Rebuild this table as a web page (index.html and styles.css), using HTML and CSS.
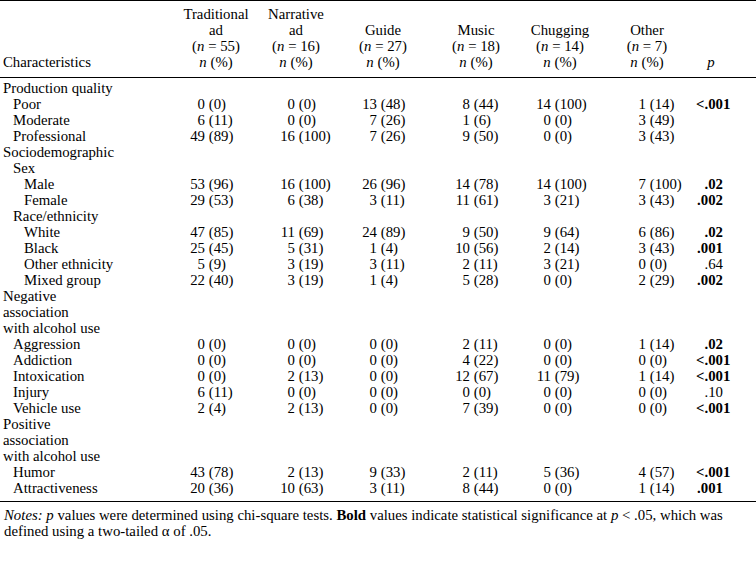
FILE: index.html
```html
<!DOCTYPE html>
<html lang="en">
<head>
<meta charset="utf-8">
<title>Ad characteristics table</title>
<link rel="stylesheet" href="styles.css">
</head>
<body>
<table class="tbl">
  <colgroup>
    <col class="c-label">
    <col class="c-trad">
    <col class="c-narr">
    <col class="c-guide">
    <col class="c-music">
    <col class="c-chug">
    <col class="c-other">
    <col class="c-p">
  </colgroup>
  <thead>
    <tr>
      <th class="h-label">Characteristics</th>
      <th>Traditional<br>ad<br>(<i>n</i> = 55)<br><i>n</i> (%)</th>
      <th>Narrative<br>ad<br>(<i>n</i> = 16)<br><i>n</i> (%)</th>
      <th>Guide<br>(<i>n</i> = 27)<br><i>n</i> (%)</th>
      <th>Music<br>(<i>n</i> = 18)<br><i>n</i> (%)</th>
      <th>Chugging<br>(<i>n</i> = 14)<br><i>n</i> (%)</th>
      <th>Other<br>(<i>n</i> = 7)<br><i>n</i> (%)</th>
      <th class="h-p"><i>p</i></th>
    </tr>
  </thead>
  <tbody>
    <tr class="first"><td class="l0">Production quality</td><td></td><td></td><td></td><td></td><td></td><td></td><td></td></tr>
    <tr><td class="l1">Poor</td><td><span class="n">0</span> (0)</td><td><span class="n">0</span> (0)</td><td><span class="n">13</span> (48)</td><td><span class="n">8</span> (44)</td><td><span class="n">14</span> (100)</td><td><span class="n">1</span> (14)</td><td class="pv"><b>&lt;.001</b></td></tr>
    <tr><td class="l1">Moderate</td><td><span class="n">6</span> (11)</td><td><span class="n">0</span> (0)</td><td><span class="n">7</span> (26)</td><td><span class="n">1</span> (6)</td><td><span class="n">0</span> (0)</td><td><span class="n">3</span> (49)</td><td class="pv"></td></tr>
    <tr><td class="l1">Professional</td><td><span class="n">49</span> (89)</td><td><span class="n">16</span> (100)</td><td><span class="n">7</span> (26)</td><td><span class="n">9</span> (50)</td><td><span class="n">0</span> (0)</td><td><span class="n">3</span> (43)</td><td class="pv"></td></tr>
    <tr><td class="l0">Sociodemographic</td><td></td><td></td><td></td><td></td><td></td><td></td><td></td></tr>
    <tr><td class="l1">Sex</td><td></td><td></td><td></td><td></td><td></td><td></td><td></td></tr>
    <tr><td class="l2">Male</td><td><span class="n">53</span> (96)</td><td><span class="n">16</span> (100)</td><td><span class="n">26</span> (96)</td><td><span class="n">14</span> (78)</td><td><span class="n">14</span> (100)</td><td><span class="n">7</span> (100)</td><td class="pv"><b>.02</b></td></tr>
    <tr><td class="l2">Female</td><td><span class="n">29</span> (53)</td><td><span class="n">6</span> (38)</td><td><span class="n">3</span> (11)</td><td><span class="n">11</span> (61)</td><td><span class="n">3</span> (21)</td><td><span class="n">3</span> (43)</td><td class="pv"><b>.002</b></td></tr>
    <tr><td class="l1">Race/ethnicity</td><td></td><td></td><td></td><td></td><td></td><td></td><td></td></tr>
    <tr><td class="l2">White</td><td><span class="n">47</span> (85)</td><td><span class="n">11</span> (69)</td><td><span class="n">24</span> (89)</td><td><span class="n">9</span> (50)</td><td><span class="n">9</span> (64)</td><td><span class="n">6</span> (86)</td><td class="pv"><b>.02</b></td></tr>
    <tr><td class="l2">Black</td><td><span class="n">25</span> (45)</td><td><span class="n">5</span> (31)</td><td><span class="n">1</span> (4)</td><td><span class="n">10</span> (56)</td><td><span class="n">2</span> (14)</td><td><span class="n">3</span> (43)</td><td class="pv"><b>.001</b></td></tr>
    <tr><td class="l2">Other ethnicity</td><td><span class="n">5</span> (9)</td><td><span class="n">3</span> (19)</td><td><span class="n">3</span> (11)</td><td><span class="n">2</span> (11)</td><td><span class="n">3</span> (21)</td><td><span class="n">0</span> (0)</td><td class="pv">.64</td></tr>
    <tr><td class="l2">Mixed group</td><td><span class="n">22</span> (40)</td><td><span class="n">3</span> (19)</td><td><span class="n">1</span> (4)</td><td><span class="n">5</span> (28)</td><td><span class="n">0</span> (0)</td><td><span class="n">2</span> (29)</td><td class="pv"><b>.002</b></td></tr>
    <tr><td class="l0">Negative<br>association<br>with alcohol use</td><td></td><td></td><td></td><td></td><td></td><td></td><td></td></tr>
    <tr><td class="l1">Aggression</td><td><span class="n">0</span> (0)</td><td><span class="n">0</span> (0)</td><td><span class="n">0</span> (0)</td><td><span class="n">2</span> (11)</td><td><span class="n">0</span> (0)</td><td><span class="n">1</span> (14)</td><td class="pv"><b>.02</b></td></tr>
    <tr><td class="l1">Addiction</td><td><span class="n">0</span> (0)</td><td><span class="n">0</span> (0)</td><td><span class="n">0</span> (0)</td><td><span class="n">4</span> (22)</td><td><span class="n">0</span> (0)</td><td><span class="n">0</span> (0)</td><td class="pv"><b>&lt;.001</b></td></tr>
    <tr><td class="l1">Intoxication</td><td><span class="n">0</span> (0)</td><td><span class="n">2</span> (13)</td><td><span class="n">0</span> (0)</td><td><span class="n">12</span> (67)</td><td><span class="n">11</span> (79)</td><td><span class="n">1</span> (14)</td><td class="pv"><b>&lt;.001</b></td></tr>
    <tr><td class="l1">Injury</td><td><span class="n">6</span> (11)</td><td><span class="n">0</span> (0)</td><td><span class="n">0</span> (0)</td><td><span class="n">0</span> (0)</td><td><span class="n">0</span> (0)</td><td><span class="n">0</span> (0)</td><td class="pv">.10</td></tr>
    <tr><td class="l1">Vehicle use</td><td><span class="n">2</span> (4)</td><td><span class="n">2</span> (13)</td><td><span class="n">0</span> (0)</td><td><span class="n">7</span> (39)</td><td><span class="n">0</span> (0)</td><td><span class="n">0</span> (0)</td><td class="pv"><b>&lt;.001</b></td></tr>
    <tr><td class="l0">Positive<br>association<br>with alcohol use</td><td></td><td></td><td></td><td></td><td></td><td></td><td></td></tr>
    <tr><td class="l1">Humor</td><td><span class="n">43</span> (78)</td><td><span class="n">2</span> (13)</td><td><span class="n">9</span> (33)</td><td><span class="n">2</span> (11)</td><td><span class="n">5</span> (36)</td><td><span class="n">4</span> (57)</td><td class="pv"><b>&lt;.001</b></td></tr>
    <tr class="last"><td class="l1">Attractiveness</td><td><span class="n">20</span> (36)</td><td><span class="n">10</span> (63)</td><td><span class="n">3</span> (11)</td><td><span class="n">8</span> (44)</td><td><span class="n">0</span> (0)</td><td><span class="n">1</span> (14)</td><td class="pv"><b>.001</b></td></tr>
  </tbody>
</table>
<p class="notes"><i>Notes: p</i> values were determined using chi-square tests. <b>Bold</b> values indicate statistical significance at <i>p</i> &lt; .05, which was<br>defined using a two-tailed &alpha; of .05.</p>
</body>
</html>
```

FILE: styles.css
```css
body {
  margin: 0;
  background: #ffffff;
  color: #000000;
  font-family: "Liberation Serif", "Times New Roman", serif;
  font-size: 14.8px;
  line-height: 16px;
}

.tbl {
  width: 756px;
  border-collapse: collapse;
  table-layout: fixed;
}

.c-label { width: 176px; }
.c-trad { width: 80px; }
.c-narr { width: 80px; }
.c-guide { width: 94px; }
.c-music { width: 92px; }
.c-chug { width: 76px; }
.c-other { width: 98px; }
.c-p { width: 60px; }

.tbl th {
  font-weight: normal;
  text-align: center;
  vertical-align: bottom;
  padding: 5px 0 7px;
  border-top: 1px solid #000;
  border-bottom: 1px solid #000;
  white-space: nowrap;
}

.tbl th.h-label {
  text-align: left;
  padding-left: 3px;
}

.tbl th.h-p {
  padding-right: 30px;
}

.tbl td {
  padding: 0;
  white-space: nowrap;
  vertical-align: top;
}

.tbl tr.first td { padding-top: 2px; }
.tbl tr.last td {
  padding-bottom: 5px;
  border-bottom: 1px solid #000;
}

.tbl td.l0 { padding-left: 3px; }
.tbl td.l1 { padding-left: 13px; }
.tbl td.l2 { padding-left: 24px; }

.n {
  display: inline-block;
  width: 15px;
  text-align: right;
}

.tbl td:nth-child(2) { padding-left: 14px; }
.tbl td:nth-child(3) { padding-left: 24px; }
.tbl td:nth-child(4) { padding-left: 26px; }
.tbl td:nth-child(5) { padding-left: 25px; }
.tbl td:nth-child(6) { padding-left: 14px; }
.tbl td:nth-child(7) { padding-left: 33px; }

.tbl td.pv {
  text-align: right;
  padding-right: 33px;
}

.notes {
  margin: 5px 0 0;
  padding-left: 4px;
  white-space: nowrap;
}
```
